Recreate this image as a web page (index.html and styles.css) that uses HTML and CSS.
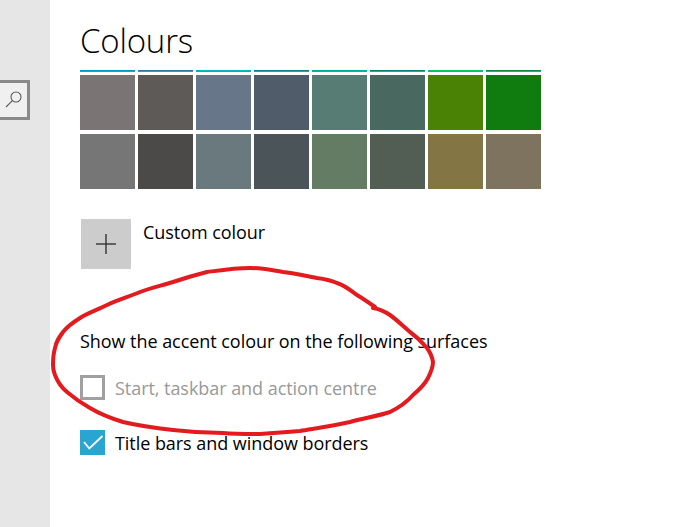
FILE: index.html
```html
<!DOCTYPE html>
<html lang="en">
<head>
<meta charset="utf-8">
<title>Colours</title>
<link rel="stylesheet" href="styles.css">
</head>
<body>
<div class="app">
  <aside class="sidebar">
    <div class="search">
      <svg class="search-icon" width="20" height="22" viewBox="0 0 20 22">
        <circle cx="13" cy="7" r="5" fill="none" stroke="#5a5a5a" stroke-width="1.1"/>
        <line x1="9.4" y1="10.6" x2="3" y2="17" stroke="#5a5a5a" stroke-width="1.1"/>
      </svg>
    </div>
  </aside>
  <main class="content">
    <h1 class="title">Colours</h1>
    <div class="palette">
      <span class="strip" style="background:#0099bc"></span>
      <span class="strip" style="background:#2d7d9a"></span>
      <span class="strip" style="background:#00b7c3"></span>
      <span class="strip" style="background:#038387"></span>
      <span class="strip" style="background:#00b294"></span>
      <span class="strip" style="background:#018574"></span>
      <span class="strip" style="background:#00cc6a"></span>
      <span class="strip" style="background:#10893e"></span>

      <span class="swatch" style="background:#7a7574"></span>
      <span class="swatch" style="background:#5d5a58"></span>
      <span class="swatch" style="background:#68768a"></span>
      <span class="swatch" style="background:#515c6b"></span>
      <span class="swatch" style="background:#567c73"></span>
      <span class="swatch" style="background:#486860"></span>
      <span class="swatch" style="background:#498205"></span>
      <span class="swatch" style="background:#107c10"></span>

      <span class="swatch" style="background:#767676"></span>
      <span class="swatch" style="background:#4c4a48"></span>
      <span class="swatch" style="background:#69797e"></span>
      <span class="swatch" style="background:#4a5459"></span>
      <span class="swatch" style="background:#647c64"></span>
      <span class="swatch" style="background:#525e54"></span>
      <span class="swatch" style="background:#847545"></span>
      <span class="swatch" style="background:#7e735f"></span>
    </div>

    <div class="custom">
      <div class="custom-btn">
        <svg width="22" height="22" viewBox="0 0 22 22">
          <line x1="11" y1="1" x2="11" y2="21" stroke="#333" stroke-width="1.4"/>
          <line x1="1" y1="11" x2="21" y2="11" stroke="#333" stroke-width="1.4"/>
        </svg>
      </div>
      <span class="custom-label">Custom colour</span>
    </div>

    <p class="section-label">Show the accent colour on the following surfaces</p>

    <label class="check disabled">
      <span class="box"></span>
      <span class="check-text">Start, taskbar and action centre</span>
    </label>

    <label class="check">
      <span class="box checked">
        <svg width="25" height="25" viewBox="0 0 25 25">
          <polyline points="4,12 9.3,18.5 22.5,6" fill="none" stroke="#fff" stroke-width="1.8"/>
        </svg>
      </span>
      <span class="check-text">Title bars and window borders</span>
    </label>
  </main>
</div>

<svg class="annotation" width="695" height="527" viewBox="0 0 695 527">
  <path d="M375,307 C365,300 362,298 357,295 C349,289 344,285 337,283 C330,280 325,279 317,278 C305,276 295,273 283,272 C270,270 262,268 250,268 C235,268 222,270 207,272 C195,275 185,278 173,282 C160,286 150,288 140,292 C128,297 118,300 107,305 C97,310 88,313 80,318 C72,323 67,327 63,332 C58,339 56,342 55,348 C53,355 53,360 53,365 C53,370 54,372 55,375 C58,383 61,387 67,392 C74,398 81,403 90,408 C100,414 110,418 123,422 C140,426 155,428 173,430 C190,432 205,433 223,433 C235,434 248,434 260,434 C275,433 287,432 300,431 C318,428 333,426 350,422 C365,418 378,416 390,412 C400,407 407,402 413,395 C420,389 425,384 428,378 C431,372 433,368 433,362 C432,356 430,352 427,348 C422,342 417,337 410,332 C403,326 397,320 390,315 C384,311 380,309 373,308" fill="none" stroke="#e31b1f" stroke-width="4" stroke-linecap="round" stroke-linejoin="round"/>
</svg>
</body>
</html>
```

FILE: styles.css
```css
html, body {
  margin: 0;
  padding: 0;
  background: #ffffff;
}

body {
  width: 695px;
  height: 527px;
  overflow: hidden;
  position: relative;
  font-family: "Open Sans", "Noto Sans", "Liberation Sans", sans-serif;
  color: #000;
}

.app {
  display: flex;
  height: 527px;
}

.sidebar {
  width: 50px;
  flex: none;
  background: #e6e6e6;
  padding-top: 80px;
  box-sizing: border-box;
}

.search {
  width: 43px;
  height: 40px;
  margin-left: -13px;
  box-sizing: border-box;
  border: 3px solid #8a8a8a;
  background: #f0f0f0;
  position: relative;
}

.search-icon {
  position: absolute;
  left: 13px;
  top: 7px;
}

.content {
  flex: 1;
  padding-left: 30px;
}

.title {
  margin: 0;
  padding-top: 21px;
  height: 52px;
  box-sizing: border-box;
  font-weight: 300;
  font-size: 33px;
  line-height: 40px;
  letter-spacing: -0.2px;
  color: #000;
}

.palette {
  display: grid;
  grid-template-columns: repeat(8, 55px);
  grid-template-rows: 1px 55px 55px;
  column-gap: 3px;
  row-gap: 4px;
  margin-top: 18px;
}

.strip {
  display: block;
  height: 1px;
  box-shadow: 0 0.5px 0 0 currentColor;
}

.swatch {
  display: block;
  width: 55px;
  height: 55px;
}

.custom {
  display: flex;
  align-items: flex-start;
  margin-top: 30px;
  margin-left: 1px;
}

.custom-btn {
  width: 50px;
  height: 50px;
  background: #cccccc;
  display: flex;
  align-items: center;
  justify-content: center;
}

.custom-label {
  margin-left: 12px;
  margin-top: 1px;
  font-size: 18px;
  line-height: 24px;
  letter-spacing: -0.05px;
  color: #000;
}

.section-label {
  margin: 60px 0 0 0;
  font-size: 18px;
  line-height: 24px;
  letter-spacing: -0.05px;
  color: #000;
}

.check {
  display: flex;
  align-items: center;
  gap: 10px;
  font-size: 18px;
  line-height: 24px;
  letter-spacing: -0.05px;
  color: #000;
}

.check.disabled {
  margin-top: 22px;
  color: #999999;
}

.check + .check {
  margin-top: 30px;
}

.box {
  width: 25px;
  height: 25px;
  box-sizing: border-box;
  flex: none;
  display: block;
}

.disabled .box {
  border: 3px solid #a0a0a0;
}

.box.checked {
  background: #2aa4d0;
}

.box.checked svg {
  display: block;
}

.annotation {
  position: absolute;
  left: 0;
  top: 0;
  pointer-events: none;
}
```
